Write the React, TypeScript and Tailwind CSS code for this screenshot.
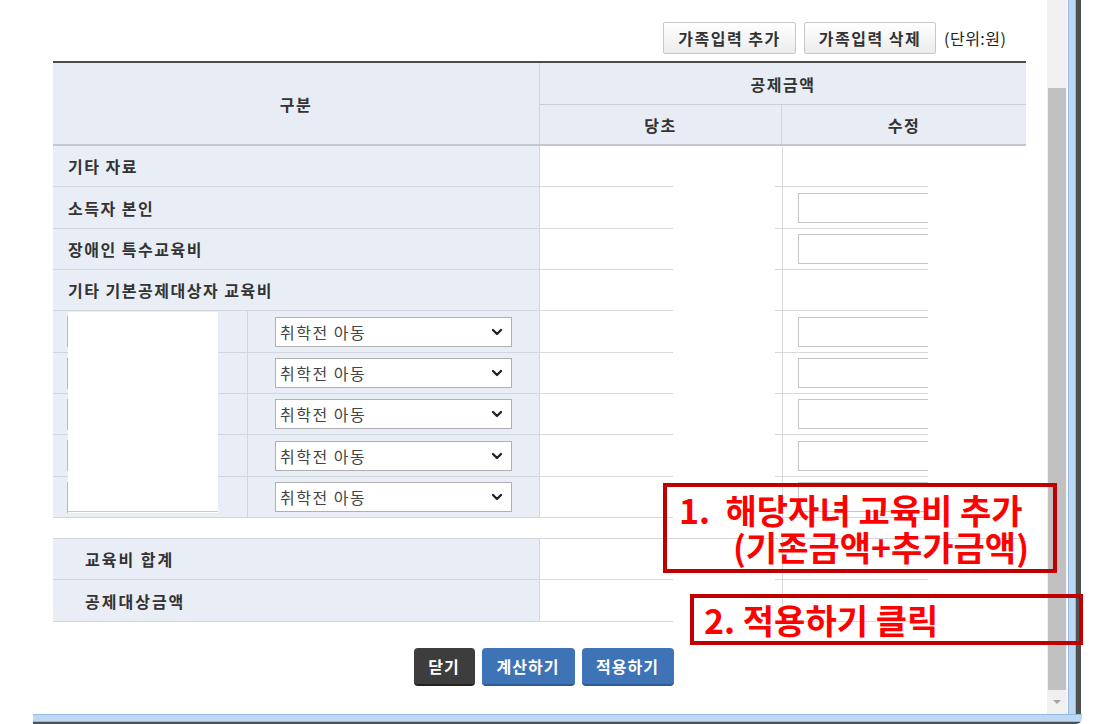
import { ChevronDown } from "lucide-react";

const rowHeights = [41, 42, 41, 41, 42, 41, 41, 42, 41];

function EditCell({ input }: { input: boolean }) {
  return (
    <div className="flex w-[244px] flex-col border-l border-[#dadada]">
      <div className="flex flex-1 items-center">
        {input ? <div className="ml-[15px] h-[30px] w-[130px] border border-r-0 border-[#c6c6c6] bg-white" /> : null}
      </div>
      <div className="-ml-[8px] h-px w-[153px] bg-[#d9d9d9]" />
    </div>
  );
}

function OrigCell() {
  return (
    <div className="flex w-[242px] flex-col justify-end">
      <div className="h-px w-[133px] bg-[#d9d9d9]" />
    </div>
  );
}

function LabelRow({ label, h, input, indent }: { label: string; h: number; input: boolean; indent?: boolean }) {
  return (
    <div className="flex" style={{ height: h }}>
      <div
        className={`flex w-[487px] items-center border-r border-b border-[#d0d5de] bg-[#e9edf5] font-bold text-[#333] ${
          indent ? "pl-[32px] tracking-[2px]" : "pl-[15px] tracking-[1.5px]"
        }`}
      >
        {label}
      </div>
      <OrigCell />
      <EditCell input={input} />
    </div>
  );
}

function SelectRow({ h }: { h: number }) {
  return (
    <div className="flex" style={{ height: h }}>
      <div className="flex w-[487px] border-r border-b border-[#d0d5de] bg-[#e9edf5]">
        <div className="flex w-[195px] items-center border-r border-[#d0d5de] pl-[14px]">
          <div className="h-[31px] w-[151px] border-l border-[#b9b9b9] bg-white" />
        </div>
        <div className="flex flex-1 items-center pl-[27px]">
          <div className="flex h-[30px] w-[237px] items-center justify-between border border-[#b0b0b0] bg-white pr-[6px] pl-[4px] tracking-[1.5px] text-[#444]">
            <span>취학전 아동</span>
            <ChevronDown size={16} strokeWidth={3.5} className="text-[#222]" />
          </div>
        </div>
      </div>
      <OrigCell />
      <EditCell input />
    </div>
  );
}

export default function App() {
  return (
    <div className="relative flex h-[724px] w-[1116px] flex-col overflow-hidden bg-white font-['Noto_Sans_CJK_KR','Noto_Sans',sans-serif] text-[16px] leading-none">
      <div className="flex h-[714px]">
        <div className="flex w-[1047px] flex-col pt-[22px] pl-[53px]">
          <div className="flex h-[32px] w-[973px] items-center justify-end gap-[8px] pr-[16px]">
            <button className="h-[32px] w-[133px] rounded-[2px] border border-[#c8c8c8] bg-gradient-to-b from-white to-[#ececec] font-bold tracking-[1.5px] text-[#333]">
              가족입력 추가
            </button>
            <button className="h-[32px] w-[132px] rounded-[2px] border border-[#c8c8c8] bg-gradient-to-b from-white to-[#ececec] font-bold tracking-[1.5px] text-[#333]">
              가족입력 삭제
            </button>
            <span className="w-[66px] tracking-[0.5px] text-[#222]">(단위:원)</span>
          </div>

          <div className="mt-[7px] w-[973px] border-t-2 border-[#4b4b4b]">
            <div className="flex h-[83px] border-b-2 border-[#c3c7cf] bg-[#e8ecf4] font-bold tracking-[1.5px] text-[#333]">
              <div className="flex w-[487px] items-center justify-center border-r border-[#d0d5de]">구분</div>
              <div className="flex flex-1 flex-col">
                <div className="flex h-[42px] items-center justify-center border-b border-[#c9cdd5]">공제금액</div>
                <div className="flex flex-1">
                  <div className="flex w-[242px] items-center justify-center border-r border-[#d0d5de]">당초</div>
                  <div className="flex flex-1 items-center justify-center">수정</div>
                </div>
              </div>
            </div>

            <LabelRow label="기타 자료" h={rowHeights[0]} input={false} />
            <LabelRow label="소득자 본인" h={rowHeights[1]} input />
            <LabelRow label="장애인 특수교육비" h={rowHeights[2]} input />
            <LabelRow label="기타 기본공제대상자 교육비" h={rowHeights[3]} input={false} />
            {rowHeights.slice(4).map((h, i) => (
              <SelectRow key={i} h={h} />
            ))}

            <div className="h-[20px]" />
            <div className="border-t border-[#d0d5de]">
              <LabelRow label="교육비 합계" h={41} input={false} indent />
              <LabelRow label="공제대상금액" h={42} input={false} indent />
            </div>
          </div>

          <div className="mt-[26px] flex w-[973px] justify-center gap-[7px] pl-[8px] font-bold tracking-[1px] text-white">
            <button className="h-[38px] w-[61px] rounded-[4px] border-b-2 border-[#222] bg-[#3d3d3d]">닫기</button>
            <button className="h-[38px] w-[93px] rounded-[4px] border-b-2 border-[#2b5a94] bg-[#3e74b6]">계산하기</button>
            <button className="h-[38px] w-[92px] rounded-[4px] border-b-2 border-[#2b5a94] bg-[#3e74b6]">적용하기</button>
          </div>
        </div>

        <div className="flex w-[20px] flex-col bg-[#f0f0f0]">
          <div className="h-[88px]" />
          <div className="mx-[1px] flex-1 bg-[#c1c1c1]" />
          <div className="flex h-[24px] items-center justify-center">
            <div className="h-0 w-0 border-x-[4px] border-t-[4px] border-x-transparent border-t-[#a3a3a3]" />
          </div>
        </div>
        <div className="w-[1px] bg-white" />
        <div className="w-[8px] border-x border-[#93b9e2] bg-[#bcd8f5]" />
        <div className="w-[5px] bg-[#505050]" />
        <div className="flex-1 bg-white" />
      </div>
      <div className="ml-[33px] flex h-[10px] w-[1049px] flex-col overflow-hidden rounded-br-[6px]">
        <div className="h-[8px] border-y border-[#93b9e2] bg-[#bcd8f5]" />
        <div className="h-[2px] bg-[#505050]" />
      </div>

      {/* redacted names */}
      <div className="absolute top-[312px] left-[68px] h-[200px] w-[150px] border-b border-[#c8c8c8] bg-white" />

      {/* annotations */}
      <div className="absolute top-[483px] left-[663px] h-[90px] w-[394px] border-4 border-[#c00000] pt-[4px] pl-[12px] text-[34px] leading-[37px] font-bold text-[#ff0000]">
        <div className="whitespace-pre">1.  해당자녀 교육비 추가</div>
        <div className="pl-[54px]">(기존금액+추가금액)</div>
      </div>
      <div className="absolute top-[594px] left-[690px] flex h-[51px] w-[393px] items-center border-4 border-[#c00000] pl-[10px] text-[34px] font-bold text-[#ff0000]">
        2. 적용하기 클릭
      </div>
    </div>
  );
}
